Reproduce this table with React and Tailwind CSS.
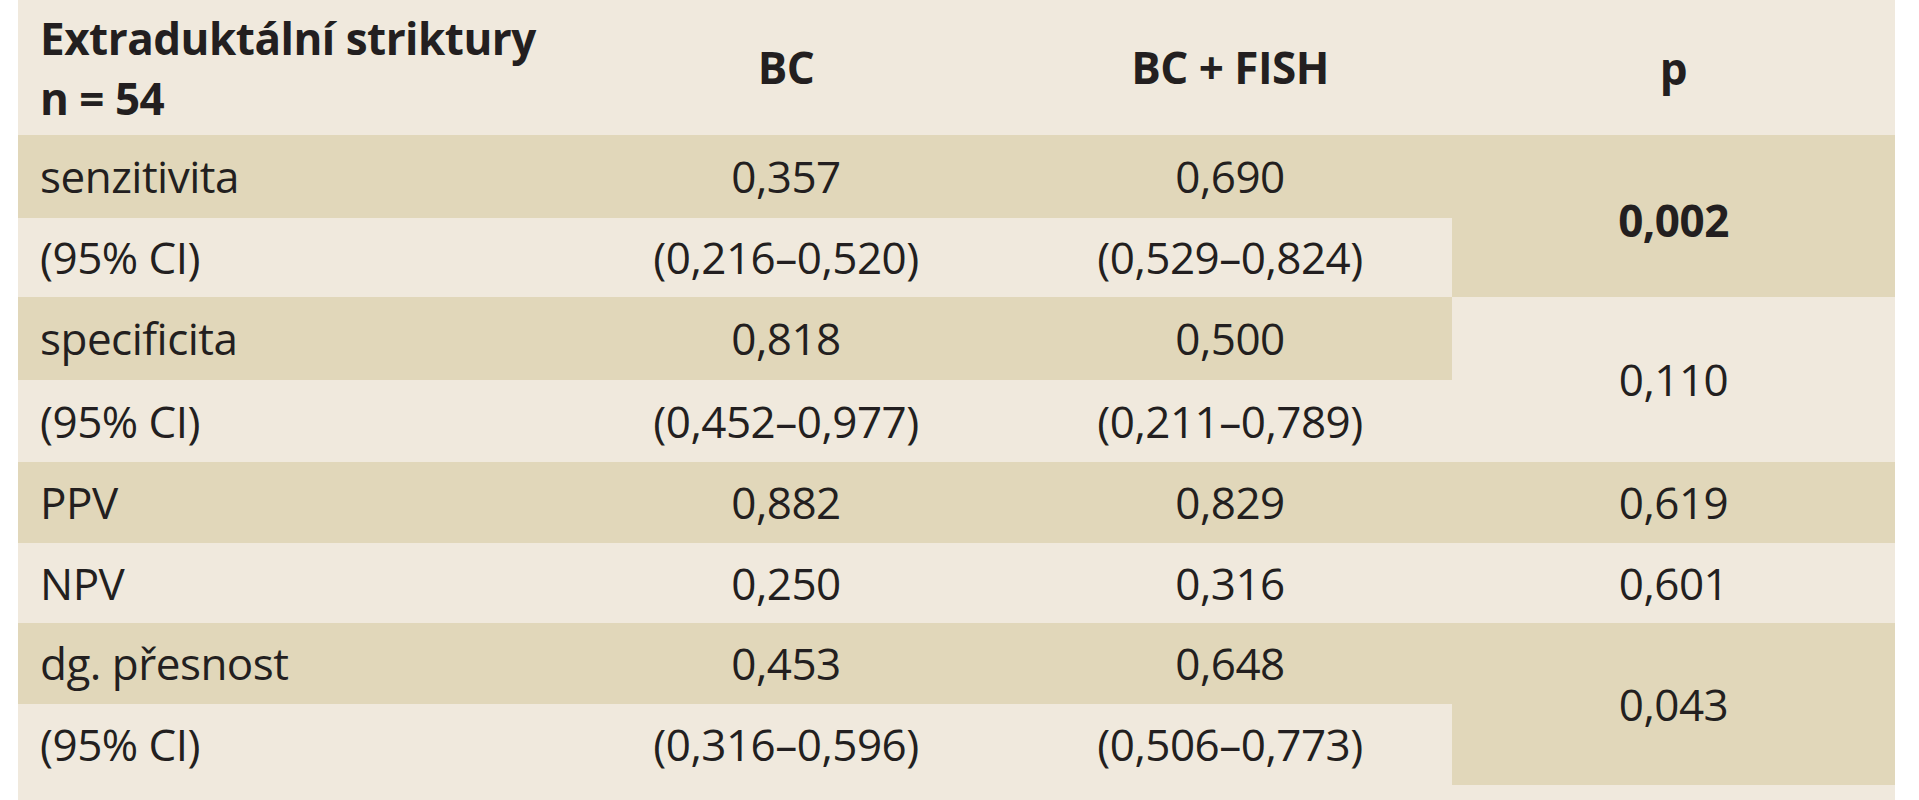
import React from "react";

const rows = [
  { label: "senzitivita", bc: "0,357", fish: "0,690", bg: "bg-[#e1d7ba]", row: "row-start-2" },
  { label: "(95% CI)", bc: "(0,216–0,520)", fish: "(0,529–0,824)", bg: "bg-[#f0e9dd]", row: "row-start-3" },
  { label: "specificita", bc: "0,818", fish: "0,500", bg: "bg-[#e1d7ba]", row: "row-start-4" },
  { label: "(95% CI)", bc: "(0,452–0,977)", fish: "(0,211–0,789)", bg: "bg-[#f0e9dd]", row: "row-start-5" },
  { label: "PPV", bc: "0,882", fish: "0,829", bg: "bg-[#e1d7ba]", row: "row-start-6" },
  { label: "NPV", bc: "0,250", fish: "0,316", bg: "bg-[#f0e9dd]", row: "row-start-7" },
  { label: "dg. přesnost", bc: "0,453", fish: "0,648", bg: "bg-[#e1d7ba]", row: "row-start-8" },
  { label: "(95% CI)", bc: "(0,316–0,596)", fish: "(0,506–0,773)", bg: "bg-[#f0e9dd]", row: "row-start-9" },
];

const pCells = [
  { v: "0,002", cls: "row-start-2 row-span-2 bg-[#e1d7ba] font-bold pt-[8px]" },
  { v: "0,110", cls: "row-start-4 row-span-2 bg-[#f0e9dd]" },
  { v: "0,619", cls: "row-start-6 row-span-1 bg-[#e1d7ba]" },
  { v: "0,601", cls: "row-start-7 row-span-1 bg-[#f0e9dd]" },
  { v: "0,043", cls: "row-start-8 row-span-2 bg-[#e1d7ba]" },
];

export default function App() {
  return (
    <div className="min-h-[800px] w-full bg-white font-['Open_Sans',sans-serif] text-[#231f20]">
      <div className="ml-[18px] w-[1877px] bg-[#f0e9dd] pb-[15px]">
        <div className="grid grid-cols-[546px_444px_444px_443px] grid-rows-[135px_83px_79px_83px_82px_81px_80px_81px_81px] text-[44px] leading-[59px] tracking-[-0.5px]">
          <div className="col-start-1 row-start-1 flex items-center pl-[22px]">
            <p className="font-bold leading-[60px]">
              Extraduktální striktury
              <br />
              n = 54
            </p>
          </div>
          <div className="col-start-2 row-start-1 flex items-center justify-center font-bold">BC</div>
          <div className="col-start-3 row-start-1 flex items-center justify-center font-bold">BC + FISH</div>
          <div className="col-start-4 row-start-1 flex items-center justify-center pt-[2px] font-bold">p</div>

          {rows.map((r, i) => (
            <React.Fragment key={i}>
              <div className={`col-start-1 ${r.row} ${r.bg} flex items-center pl-[22px]`}>{r.label}</div>
              <div className={`col-start-2 ${r.row} ${r.bg} flex items-center justify-center`}>{r.bc}</div>
              <div className={`col-start-3 ${r.row} ${r.bg} flex items-center justify-center`}>{r.fish}</div>
            </React.Fragment>
          ))}

          {pCells.map((p, i) => (
            <div key={i} className={`col-start-4 ${p.cls} flex items-center justify-center`}>{p.v}</div>
          ))}
        </div>
      </div>
    </div>
  );
}
